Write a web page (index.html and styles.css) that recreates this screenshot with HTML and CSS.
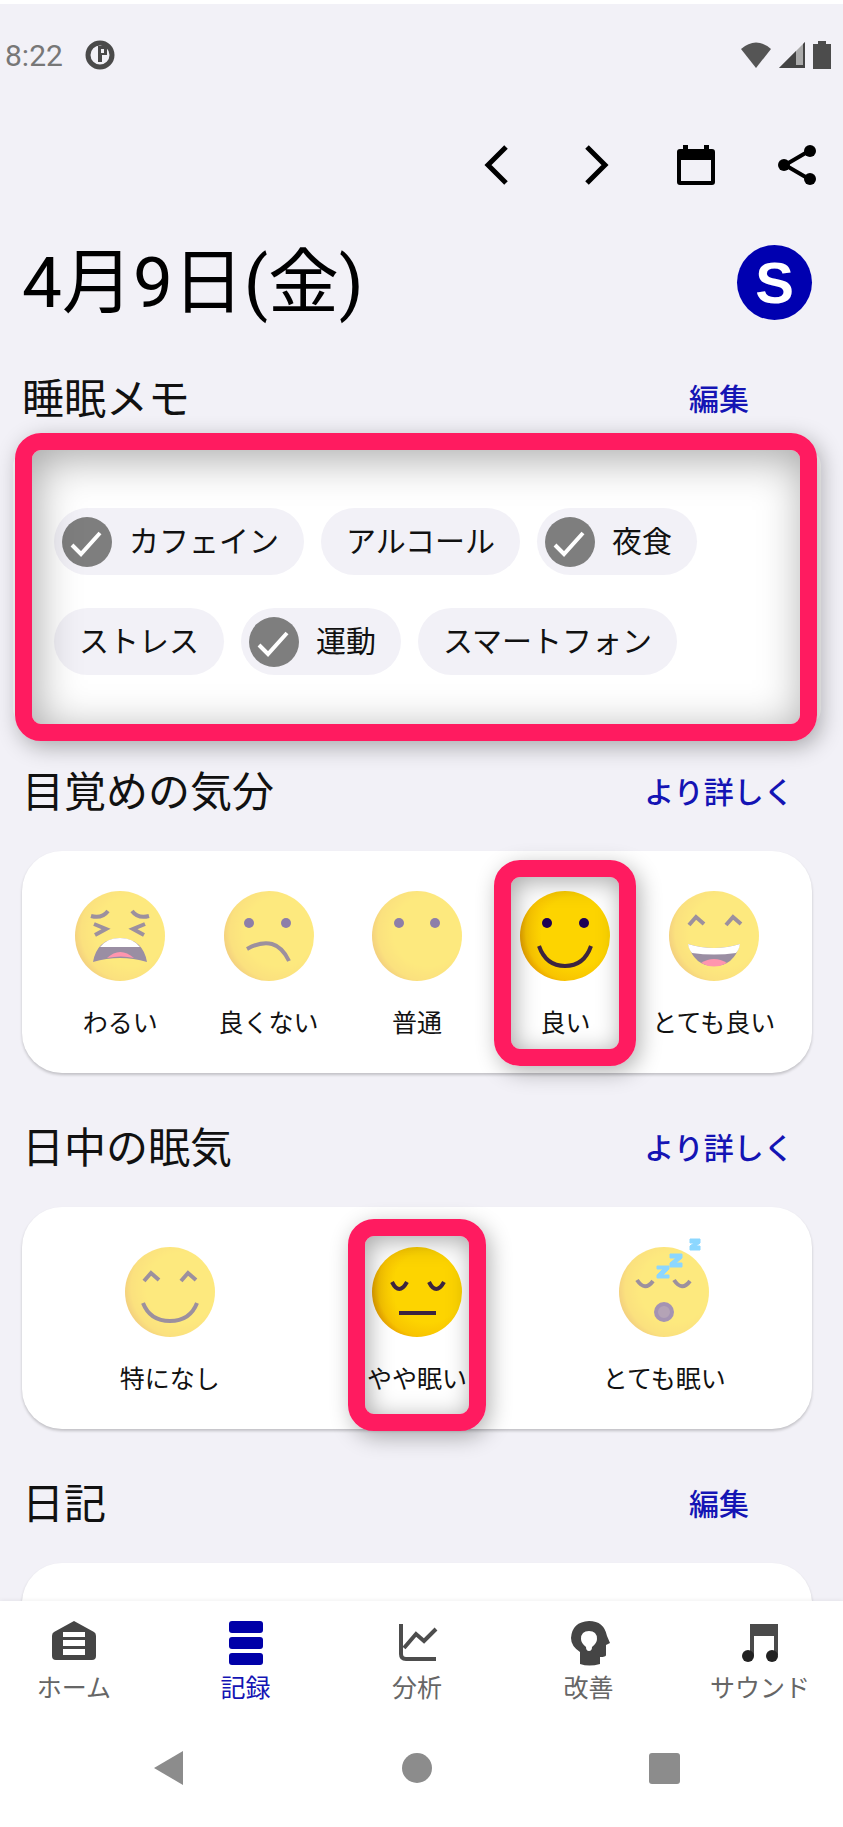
FILE: index.html
```html
<!DOCTYPE html>
<html lang="ja">

<head>
  <meta charset="UTF-8">
  <meta name="viewport" content="width=device-width, initial-scale=1.0">
  <title>記録</title>
  <link rel="stylesheet" href="styles.css">
</head>

<body>
  <!-- shared face gradients -->
  <svg class="defs" aria-hidden="true">
    <defs>
      <radialGradient id="face" cx="0.62" cy="0.45" r="0.65">
        <stop offset="0.6" stop-color="#fdd400" />
        <stop offset="0.85" stop-color="#f8c400" />
        <stop offset="1" stop-color="#e59a00" />
      </radialGradient>
    </defs>
  </svg>

  <div class="status-bar">
    <div class="status-group">
      <span class="clock">8:22</span>
      <svg width="30" height="30" viewBox="0 0 30 30">
        <circle cx="15" cy="15" r="12" fill="none" stroke="#4a4a4a" stroke-width="5" />
        <path d="M13 6h9v9h-5v7h-4z" fill="#4a4a4a" />
        <path d="M16 9h3v4h-3z" fill="#f2f1f7" />
      </svg>
    </div>
    <div class="status-group status-right">
      <svg width="30" height="26" viewBox="0 0 30 26">
        <path d="M0 7Q15-6 30 7L15 26z" fill="#555" />
      </svg>
      <svg width="26" height="26" viewBox="0 0 26 26">
        <path d="M0 26L26 0V26z" fill="#aaa" />
        <path d="M0 26L17 9V26zM17 23h9v3h-9zM24 2l2-2v26h-2z" fill="#444" />
      </svg>
      <svg width="18" height="28" viewBox="0 0 18 28">
        <path d="M5 0h8v3h5v25H0V3h5z" fill="#4c4c4c" />
      </svg>
    </div>
  </div>

  <main>
    <div class="toolbar">
      <button type="button" aria-label="前の日">
        <svg viewBox="0 0 40 40"><path d="M29 2L11 20l18 18" fill="none" stroke="#000" stroke-width="5" /></svg>
      </button>
      <button type="button" aria-label="次の日">
        <svg viewBox="0 0 40 40"><path d="M10 2l18 18-18 18" fill="none" stroke="#000" stroke-width="5" /></svg>
      </button>
      <button type="button" aria-label="カレンダー">
        <svg viewBox="0 0 40 40">
          <path d="M6 0h5v4h16V0h5v4h3q3 0 3 3v30q0 3-3 3H3q-3 0-3-3V7q0-3 3-3h3zM4 15v21h30V15z" fill="#000" fill-rule="evenodd" />
        </svg>
      </button>
      <button type="button" aria-label="共有">
        <svg viewBox="0 0 40 40">
          <path d="M32 6L8 20l24 14" fill="none" stroke="#000" stroke-width="4" />
          <circle cx="33" cy="6" r="6" />
          <circle cx="7" cy="20" r="6" />
          <circle cx="33" cy="34" r="6" />
        </svg>
      </button>
    </div>

    <div class="title-row">
      <h1>4月9日(金)</h1>
      <button type="button" class="avatar">S</button>
    </div>

    <section>
      <div class="section-head">
        <h2>睡眠メモ</h2>
        <a href="#memo">編集</a>
      </div>
      <div class="card memo highlight" id="memo">
        <div class="chips">
          <label class="chip"><input type="checkbox" checked>
            <svg class="tick" viewBox="0 0 50 50"><circle cx="25" cy="25" r="25" /><path d="M10 28l9 9 19-21" /></svg>カフェイン</label>
          <label class="chip"><input type="checkbox">アルコール</label>
          <label class="chip"><input type="checkbox" checked>
            <svg class="tick" viewBox="0 0 50 50"><circle cx="25" cy="25" r="25" /><path d="M10 28l9 9 19-21" /></svg>夜食</label>
        </div>
        <div class="chips">
          <label class="chip"><input type="checkbox">ストレス</label>
          <label class="chip"><input type="checkbox" checked>
            <svg class="tick" viewBox="0 0 50 50"><circle cx="25" cy="25" r="25" /><path d="M10 28l9 9 19-21" /></svg>運動</label>
          <label class="chip"><input type="checkbox">スマートフォン</label>
        </div>
      </div>
    </section>

    <section>
      <div class="section-head">
        <h2>目覚めの気分</h2>
        <a href="#mood">より詳しく</a>
      </div>
      <div class="card faces" id="mood">
        <label class="face">
          <input type="radio" name="mood">
          <svg viewBox="0 0 90 90">
            <circle cx="45" cy="45" r="45" fill="url(#face)" />
            <g class="line">
              <path d="M16 25q11 3 17-5M74 25q-11 3-17-5" />
              <path d="M19 33l12 5-11 6M70 33l-12 5 11 6" />
            </g>
            <path d="M18 71q4-23 27-24 23 1 27 24-27-8-54 0z" fill="#38204a" />
            <path d="M25 56q7-9 20-9t20 9z" fill="#fff" />
            <path d="M32 67q13-12 27 0-13-3-27 0z" fill="#ff2d60" />
          </svg>
          <span>わるい</span>
        </label>
        <label class="face">
          <input type="radio" name="mood">
          <svg viewBox="0 0 90 90">
            <circle cx="45" cy="45" r="45" fill="url(#face)" />
            <g class="eyes"><circle cx="25" cy="32" r="5" /><circle cx="62" cy="32" r="5" /></g>
            <path class="line" d="M23 58q29-16 42 12" />
          </svg>
          <span>良くない</span>
        </label>
        <label class="face">
          <input type="radio" name="mood">
          <svg viewBox="0 0 90 90">
            <circle cx="45" cy="45" r="45" fill="url(#face)" />
            <g class="eyes"><circle cx="27" cy="32" r="5" /><circle cx="63" cy="32" r="5" /></g>
          </svg>
          <span>普通</span>
        </label>
        <label class="face highlight">
          <input type="radio" name="mood" checked>
          <svg viewBox="0 0 90 90">
            <circle cx="45" cy="45" r="45" fill="url(#face)" />
            <g class="eyes"><circle cx="27" cy="32" r="5" /><circle cx="64" cy="32" r="5" /></g>
            <path class="line" d="M19 55q7 20 26 20t26-20" />
          </svg>
          <span>良い</span>
        </label>
        <label class="face">
          <input type="radio" name="mood">
          <svg viewBox="0 0 90 90">
            <circle cx="45" cy="45" r="45" fill="url(#face)" />
            <path class="line" d="M20 34l7-8 8 7M57 34l7-8 8 7" />
            <path d="M19 53q26 8 52 0-6 22-26 22T19 53z" fill="#38204a" />
            <path d="M19 53q26 8 52 0-1 6-4 9-22 3-44 0-3-3-4-9z" fill="#fff" />
            <path d="M32 72q13-8 26 0-13 7-26 0z" fill="#ff2d60" />
          </svg>
          <span>とても良い</span>
        </label>
      </div>
    </section>

    <section>
      <div class="section-head">
        <h2>日中の眠気</h2>
        <a href="#sleepy">より詳しく</a>
      </div>
      <div class="card faces" id="sleepy">
        <label class="face">
          <input type="radio" name="sleepy">
          <svg viewBox="0 0 90 90">
            <circle cx="45" cy="45" r="45" fill="url(#face)" />
            <path class="line" d="M19 34l7-8 8 7M56 34l7-8 8 7M18 56q7 18 27 18t27-18" />
          </svg>
          <span>特になし</span>
        </label>
        <label class="face highlight highlight-tall">
          <input type="radio" name="sleepy" checked>
          <svg viewBox="0 0 90 90">
            <circle cx="45" cy="45" r="45" fill="url(#face)" />
            <path class="line" d="M20 35q7 14 15 0M57 35q7 14 15 0M27 66h37" />
          </svg>
          <span>やや眠い</span>
        </label>
        <label class="face">
          <input type="radio" name="sleepy">
          <svg viewBox="0 0 90 90">
            <circle cx="45" cy="45" r="45" fill="url(#face)" />
            <path class="line" d="M18 33q8 12 16 1M55 33q8 12 16 1" />
            <ellipse cx="45" cy="65" rx="8" ry="8" fill="#6b4a70" stroke="#4b2a6a" stroke-width="4" />
            <path d="M38 19h12v3l-6 6h6v3H38v-3l6-6h-6zM51 7h12v4l-6 5h6v4H51v-4l6-5h-6zM71-8h10v4l-4 3h4v4H71v-4l4-3h-4z" fill="#1cb0ff" stroke="#1cb0ff" />
          </svg>
          <span>とても眠い</span>
        </label>
      </div>
    </section>

    <section>
      <div class="section-head">
        <h2>日記</h2>
        <a href="#diary">編集</a>
      </div>
      <div class="card diary" id="diary"></div>
    </section>
  </main>

  <footer>
    <nav class="tabs">
      <a href="#home">
        <svg viewBox="0 0 44 44">
          <path d="M22 0L42 11q2 1 2 4v20q0 4-4 4H4q-4 0-4-4V15q0-3 2-4zM11 11v5h22v-5zM11 19v6h22v-6zM11 28v6h22v-6z" fill="#454545" fill-rule="evenodd" />
        </svg>
        ホーム
      </a>
      <a href="#record" class="active">
        <svg viewBox="0 0 44 44">
          <g fill="#0000a8">
            <rect x="5" y="0" width="34" height="12" rx="3" />
            <rect x="5" y="16" width="34" height="12" rx="3" />
            <rect x="5" y="32" width="34" height="12" rx="3" />
          </g>
        </svg>
        記録
      </a>
      <a href="#analysis">
        <svg viewBox="0 0 44 44">
          <path d="M6 3v30q0 5 5 5h30M9 27l12-14 8 7L41 8" fill="none" stroke="#4d4d4d" stroke-width="4" />
        </svg>
        分析
      </a>
      <a href="#improve">
        <svg viewBox="0 0 44 44">
          <path d="M22 0q15 0 18 15l3 7-4 2v10q0 2-6 2v7q-11 3-20 0V31Q4 25 4 17 5 1 22 0zM22 10q-8 0-8 8 0 4 5 8 0 4 3 4t3-4q5-4 5-8 0-8-8-8z" fill="#454545" fill-rule="evenodd" />
        </svg>
        改善
      </a>
      <a href="#sound">
        <svg viewBox="0 0 44 44">
          <path d="M12 3h28v31h-4V15H16v20h-4z" fill="#4a4a4a" />
          <circle cx="10" cy="35" r="6" fill="#222" />
          <circle cx="34" cy="35" r="6" fill="#222" />
        </svg>
        サウンド
      </a>
    </nav>

    <div class="system-nav">
      <button type="button" aria-label="戻る">
        <svg viewBox="0 0 36 36"><path d="M2 18L31 1v34z" /></svg>
      </button>
      <button type="button" aria-label="ホーム画面">
        <svg viewBox="0 0 36 36"><circle cx="18" cy="18" r="15" /></svg>
      </button>
      <button type="button" aria-label="最近のアプリ">
        <svg viewBox="0 0 36 36"><rect x="3" y="3" width="31" height="31" rx="3" /></svg>
      </button>
    </div>
  </footer>
</body>

</html>
```
FILE: styles.css
```css
*,
*::after {
  box-sizing: border-box;
}

body {
  display: flex;
  flex-direction: column;
  height: 100vh;
  margin: 0;
  border-top: 4px solid #fff;
  background: #f2f1f7;
  color: #111;
  font-family: Roboto, "Noto Sans CJK JP", sans-serif;
}

h1,
h2 {
  margin: 0;
  font-weight: 400;
}

a {
  color: #1414b4;
  text-decoration: none;
}

button {
  padding: 0;
  border: 0;
  background: none;
  font: inherit;
  cursor: pointer;
}

svg {
  display: block;
  overflow: visible;
}

.defs {
  position: absolute;
  width: 0;
  height: 0;
}

/* Status bar */
.status-bar {
  display: flex;
  justify-content: space-between;
  align-items: center;
  flex: none;
  height: 102px;
  padding: 0 12px 0 5px;
}

.status-group {
  display: flex;
  align-items: center;
  gap: 22px;
}

.status-right {
  gap: 8px;
}

.clock {
  color: #777;
  font-size: 30px;
  font-weight: 400;
}

/* Page */
main {
  flex: 1;
  min-height: 0;
  padding: 39px 31px 0 22px;
  overflow-y: auto;
  scrollbar-width: none;
}

.toolbar {
  display: flex;
  justify-content: flex-end;
  gap: 60px;
  margin-right: -5px;
}

.toolbar svg {
  width: 40px;
  height: 40px;
}

.title-row {
  display: flex;
  justify-content: space-between;
  align-items: center;
  height: 75px;
  margin: 60px 0 50px;
}

h1 {
  color: #000;
  font-size: 71px;
  line-height: 76px;
}

.avatar {
  width: 75px;
  height: 75px;
  border-radius: 50%;
  background: #0000b0;
  color: #fff;
  font-family: "Liberation Sans", sans-serif;
  font-size: 58px;
  font-weight: 700;
  line-height: 75px;
}

.section-head {
  display: flex;
  justify-content: space-between;
  align-items: center;
  height: 60px;
  margin-bottom: 28px;
}

.section-head h2 {
  font-size: 42px;
  line-height: 62px;
}

.section-head a {
  width: 186px;
  font-size: 30px;
  font-weight: 500;
  line-height: 60px;
  text-align: center;
}

.card {
  margin-bottom: 46px;
  border-radius: 40px;
  background: #fff;
  box-shadow: 0 2px 3px rgba(0, 0, 0, 0.2);
}

/* Chips */
.memo {
  display: flex;
  flex-direction: column;
  gap: 33px;
  padding: 50px 30px 42px 32px;
  border-radius: 8px;
  box-shadow: 0 0 0 9px #fff;
}

.chips {
  display: flex;
  gap: 17px;
}

.chip {
  display: flex;
  align-items: center;
  height: 67px;
  padding: 0 25px;
  border-radius: 34px;
  background: #f2f1f7;
  font-size: 30px;
  line-height: 66px;
  white-space: nowrap;
  cursor: pointer;
}

.chip input,
.face input {
  position: absolute;
  opacity: 0;
  pointer-events: none;
}

.chip:has(:checked) {
  padding-left: 8px;
}

.tick {
  width: 50px;
  height: 50px;
  margin-right: 17px;
  fill: #7e7e7e;
}

.tick path {
  fill: none;
  stroke: #fff;
  stroke-width: 4;
}

/* Faces */
.faces {
  display: flex;
  padding: 0 24px;
}

.face {
  display: flex;
  flex: 1;
  flex-direction: column;
  align-items: center;
  gap: 28px;
  padding: 40px 0 34px;
  font-size: 25px;
  line-height: 30px;
  white-space: nowrap;
  cursor: pointer;
}

.face svg {
  width: 90px;
  height: 90px;
  opacity: 0.5;
}

.face :checked + svg {
  opacity: 1;
}

.line {
  fill: none;
  stroke: #3c2440;
  stroke-width: 4;
}

.eyes {
  fill: #1d0055;
}

/* Pink frame over the selected parts */
.highlight {
  position: relative;
}

.highlight::after {
  content: "";
  position: absolute;
  top: 9px;
  bottom: 7px;
  left: 50%;
  width: 142px;
  border: 17px solid #ff1b60;
  border-radius: 26px;
  box-shadow: 4px 6px 22px rgba(0, 0, 0, 0.3), inset 3px 4px 24px rgba(0, 0, 0, 0.35);
  transform: translateX(-50%);
  pointer-events: none;
}

.highlight-tall::after {
  top: 12px;
  bottom: -2px;
  width: 138px;
}

.memo::after {
  top: -25px;
  right: -5px;
  bottom: -24px;
  left: -7px;
  width: auto;
  box-shadow: 4px 6px 22px rgba(0, 0, 0, 0.3), inset 4px 8px 44px rgba(0, 0, 0, 0.35);
  transform: none;
}

.diary {
  min-height: 222px;
}

/* Bottom bars */
footer {
  position: relative;
  flex: none;
  background: #fff;
  box-shadow: 0 -1px 4px rgba(0, 0, 0, 0.06);
}

.tabs {
  display: flex;
  justify-content: space-between;
  padding: 20px 33px 0 24px;
}

.tabs a {
  display: flex;
  flex-direction: column;
  align-items: center;
  gap: 8px;
  width: 100px;
  color: #666;
  font-size: 25px;
  line-height: 32px;
  white-space: nowrap;
}

.tabs .active {
  color: #1414b4;
}

.tabs svg {
  width: 44px;
  height: 44px;
}

.system-nav {
  display: flex;
  padding: 45px 55px 41px 46px;
}

.system-nav button {
  display: flex;
  flex: 1;
  justify-content: center;
}

.system-nav svg {
  width: 36px;
  height: 36px;
  fill: #8c8c8c;
}
```
